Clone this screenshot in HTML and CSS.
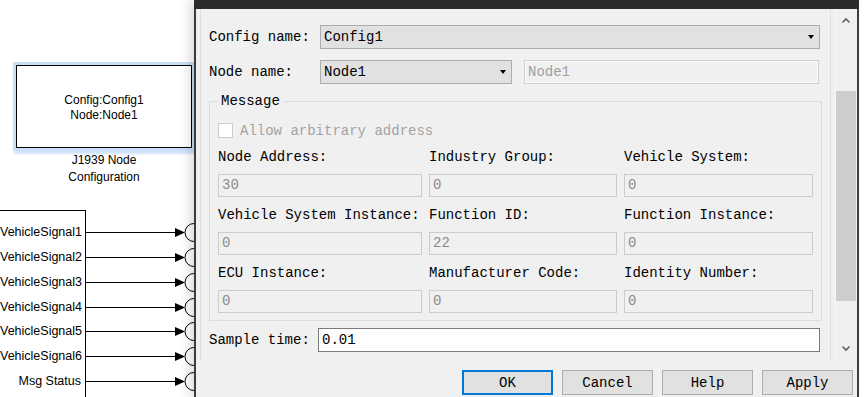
FILE: index.html
```html
<!DOCTYPE html>
<html>
<head>
<meta charset="utf-8">
<link rel="stylesheet" href="styles.css">
</head>
<body>
<div class="block-cfg">
  <div>Config:Config1</div>
  <div>Node:Node1</div>
</div>
<div class="block-caption">J1939 Node<br>Configuration</div>

<div class="block-rx">
  <div class="port-label">VehicleSignal1</div>
  <div class="port-label">VehicleSignal2</div>
  <div class="port-label">VehicleSignal3</div>
  <div class="port-label">VehicleSignal4</div>
  <div class="port-label">VehicleSignal5</div>
  <div class="port-label">VehicleSignal6</div>
  <div class="port-label">Msg Status</div>
</div>
<svg class="wires" width="115" height="187" viewBox="0 0 115 187">
  <g stroke="#000" stroke-width="1" fill="none">
    <path d="M1 22.5H91M1 47.5H91M1 72.5H91M1 97.5H91M1 121.5H91M1 146.5H91M1 171.5H91"/>
    <path d="M109 13.5A9 9 0 0 0 109 31.5M109 38.5A9 9 0 0 0 109 56.5M109 63.5A9 9 0 0 0 109 81.5M109 88.5A9 9 0 0 0 109 106.5M109 112.5A9 9 0 0 0 109 130.5M109 137.5A9 9 0 0 0 109 155.5M109 162.5A9 9 0 0 0 109 180.5"/>
  </g>
  <g fill="#000">
    <path d="M90 18L100 22.5L90 27Z"/>
    <path d="M90 43L100 47.5L90 52Z"/>
    <path d="M90 68L100 72.5L90 77Z"/>
    <path d="M90 93L100 97.5L90 102Z"/>
    <path d="M90 117L100 121.5L90 126Z"/>
    <path d="M90 142L100 146.5L90 151Z"/>
    <path d="M90 167L100 171.5L90 176Z"/>
  </g>
</svg>

<div class="dialog">
  <div class="titlebar"></div>
  <div class="panel">
    <div class="content">
      <div class="row">
        <span class="row-label">Config name:</span>
        <div class="select grow"><span>Config1</span><span class="caret"></span></div>
      </div>
      <div class="row row-2">
        <span class="row-label">Node name:</span>
        <div class="select node-select"><span>Node1</span><span class="caret"></span></div>
        <div class="field-disabled">Node1</div>
      </div>
      <fieldset class="group">
        <legend>Message</legend>
        <div class="check-row">
          <span class="checkbox"></span>
          <span class="check-text">Allow arbitrary address</span>
        </div>
        <div class="grid">
          <div class="cell"><div class="cell-label">Node Address:</div><div class="input">30</div></div>
          <div class="cell"><div class="cell-label">Industry Group:</div><div class="input">0</div></div>
          <div class="cell"><div class="cell-label">Vehicle System:</div><div class="input">0</div></div>
          <div class="cell"><div class="cell-label">Vehicle System Instance:</div><div class="input">0</div></div>
          <div class="cell"><div class="cell-label">Function ID:</div><div class="input">22</div></div>
          <div class="cell"><div class="cell-label">Function Instance:</div><div class="input">0</div></div>
          <div class="cell"><div class="cell-label">ECU Instance:</div><div class="input">0</div></div>
          <div class="cell"><div class="cell-label">Manufacturer Code:</div><div class="input">0</div></div>
          <div class="cell"><div class="cell-label">Identity Number:</div><div class="input">0</div></div>
        </div>
      </fieldset>
      <div class="row sample-row">
        <span class="sample-label">Sample time:</span>
        <div class="edit">0.01</div>
      </div>
    </div>
    <div class="scrollbar">
      <div class="sb-btn">
        <svg width="10" height="8" viewBox="0 0 10 8"><path d="M1.5 5.5L5 2L8.5 5.5" fill="none" stroke="#606060" stroke-width="1.6"/></svg>
      </div>
      <div class="sb-track"><div class="sb-thumb"></div></div>
      <div class="sb-btn">
        <svg width="10" height="8" viewBox="0 0 10 8"><path d="M1.5 2.5L5 6L8.5 2.5" fill="none" stroke="#606060" stroke-width="1.6"/></svg>
      </div>
    </div>
  </div>
  <div class="buttons">
    <button class="btn btn-default">OK</button>
    <button class="btn">Cancel</button>
    <button class="btn">Help</button>
    <button class="btn">Apply</button>
  </div>
</div>
</body>
</html>
```
FILE: styles.css
```css
* { box-sizing: border-box; }
html, body { margin: 0; padding: 0; }
body {
  width: 865px;
  height: 397px;
  overflow: hidden;
  position: relative;
  background: #ffffff;
  font-family: "Liberation Sans", Arial, sans-serif;
  color: #000;
}

/* Simulink canvas blocks */
.block-cfg {
  position: absolute;
  left: 16px;
  top: 65px;
  width: 176px;
  height: 83px;
  border: 1px solid #000;
  background: #fff;
  box-shadow: 0 0 0 3px #c9def7, 1px 3px 2px 3px #d3e4f8;
  display: flex;
  flex-direction: column;
  align-items: center;
  justify-content: center;
  font-size: 12px;
  line-height: 15px;
  padding-top: 2px;
}
.block-caption {
  position: absolute;
  left: 16px;
  top: 152px;
  width: 176px;
  text-align: center;
  font-size: 12px;
  line-height: 16.5px;
}
.block-rx {
  position: absolute;
  left: -1px;
  top: 210px;
  width: 87px;
  height: 200px;
  border: 1px solid #000;
  background: #fff;
  padding-top: 9px;
  padding-right: 4px;
  font-size: 12.5px;
}
.port-label {
  height: 24.85px;
  line-height: 24.85px;
  text-align: right;
  white-space: nowrap;
}
.wires {
  position: absolute;
  left: 85px;
  top: 210px;
}

/* Dialog window */
.dialog {
  position: absolute;
  left: 194px;
  top: 0;
  width: 665px;
  height: 397px;
  background: #f0f0f0;
  border-left: 2px solid #3c3c3c;
  border-right: 2px solid #3c3c3c;
  box-shadow: -5px 0 10px rgba(0, 0, 0, 0.13);
  display: flex;
  flex-direction: column;
  font-family: "Liberation Mono", "Courier New", monospace;
  font-size: 14px;
  color: #000;
}
.titlebar {
  height: 9px;
  background: #2b2b2b;
  margin: 0 -2px;
}
.panel {
  display: flex;
  height: 351px;
  margin-left: 4px;
}
.content {
  width: 631px;
  border-left: 1px solid #dcdcdc;
  border-right: 1px solid #e2e2e2;
  padding: 16px 10px 0 8px;
}
.row {
  display: flex;
  align-items: center;
  height: 24px;
}
.row-2 { margin-top: 11px; }
.row-label {
  width: 111px;
  flex: none;
  white-space: nowrap;
}
.select {
  height: 24px;
  background: #e1e1e1;
  border: 1px solid #adadad;
  display: flex;
  align-items: center;
  justify-content: space-between;
  padding: 0 4px 0 3px;
}
.grow { flex: 1; }
.node-select { width: 192px; flex: none; }
.caret {
  width: 0;
  height: 0;
  border-left: 3.5px solid transparent;
  border-right: 3.5px solid transparent;
  border-top: 4px solid #000;
  margin-right: 1px;
}
.field-disabled {
  flex: 1;
  margin-left: 12px;
  margin-right: 1px;
  height: 24px;
  line-height: 22px;
  border: 1px solid #cfcfcf;
  box-shadow: inset 0 0 0 1px #fafafa;
  background: #f0f0f0;
  color: #a0a0a0;
  padding-left: 3px;
}

.group {
  width: 613px;
  margin: 8px 0 0 0;
  border: 1px solid #dcdcdc;
  padding: 0 8px 7px 8px;
  min-width: 0;
}
.group legend {
  padding: 0 3px;
  line-height: 18px;
  font-size: 14px;
}
.check-row {
  display: flex;
  align-items: center;
  height: 17px;
  margin-top: 12px;
}
.checkbox {
  width: 15px;
  height: 15px;
  border: 1px solid #cccccc;
  background: #fff;
  flex: none;
}
.check-text {
  margin-left: 7px;
  color: #a3a3a3;
  white-space: nowrap;
}
.grid {
  display: grid;
  grid-template-columns: 204px 188px 189px;
  column-gap: 7px;
  row-gap: 10px;
  margin-top: 10px;
}
.cell-label {
  height: 17px;
  line-height: 17px;
  white-space: nowrap;
}
.input {
  margin-top: 8px;
  height: 23px;
  line-height: 21px;
  border: 1px solid #cccccc;
  background: #f0f0f0;
  color: #8c8c8c;
  padding-left: 3px;
}
.sample-row { margin-top: 7px; }
.sample-label {
  width: 109px;
  flex: none;
  white-space: nowrap;
}
.edit {
  width: 504px;
  height: 24px;
  line-height: 22px;
  border: 1px solid #7a7a7a;
  background: #fff;
  padding-left: 3px;
}

.scrollbar {
  margin-left: 4px;
  width: 22px;
  border-left: 1px solid #f7f7f7;
  padding-right: 1px;
  display: flex;
  flex-direction: column;
}
.sb-btn {
  height: 24px;
  display: flex;
  align-items: center;
  justify-content: center;
}
.sb-track {
  flex: 1;
}
.sb-thumb {
  margin-top: 58px;
  height: 210px;
  background: #cdcdcd;
}

.buttons {
  display: flex;
  justify-content: flex-end;
  gap: 9px;
  margin-top: 10px;
  padding-right: 4px;
}
.btn {
  width: 91px;
  height: 25px;
  background: #e1e1e1;
  border: 1px solid #adadad;
  font-family: "Liberation Mono", "Courier New", monospace;
  font-size: 14px;
  color: #000;
  padding: 0;
  margin: 0;
}
.btn-default {
  border: 2px solid #0078d7;
}
```
